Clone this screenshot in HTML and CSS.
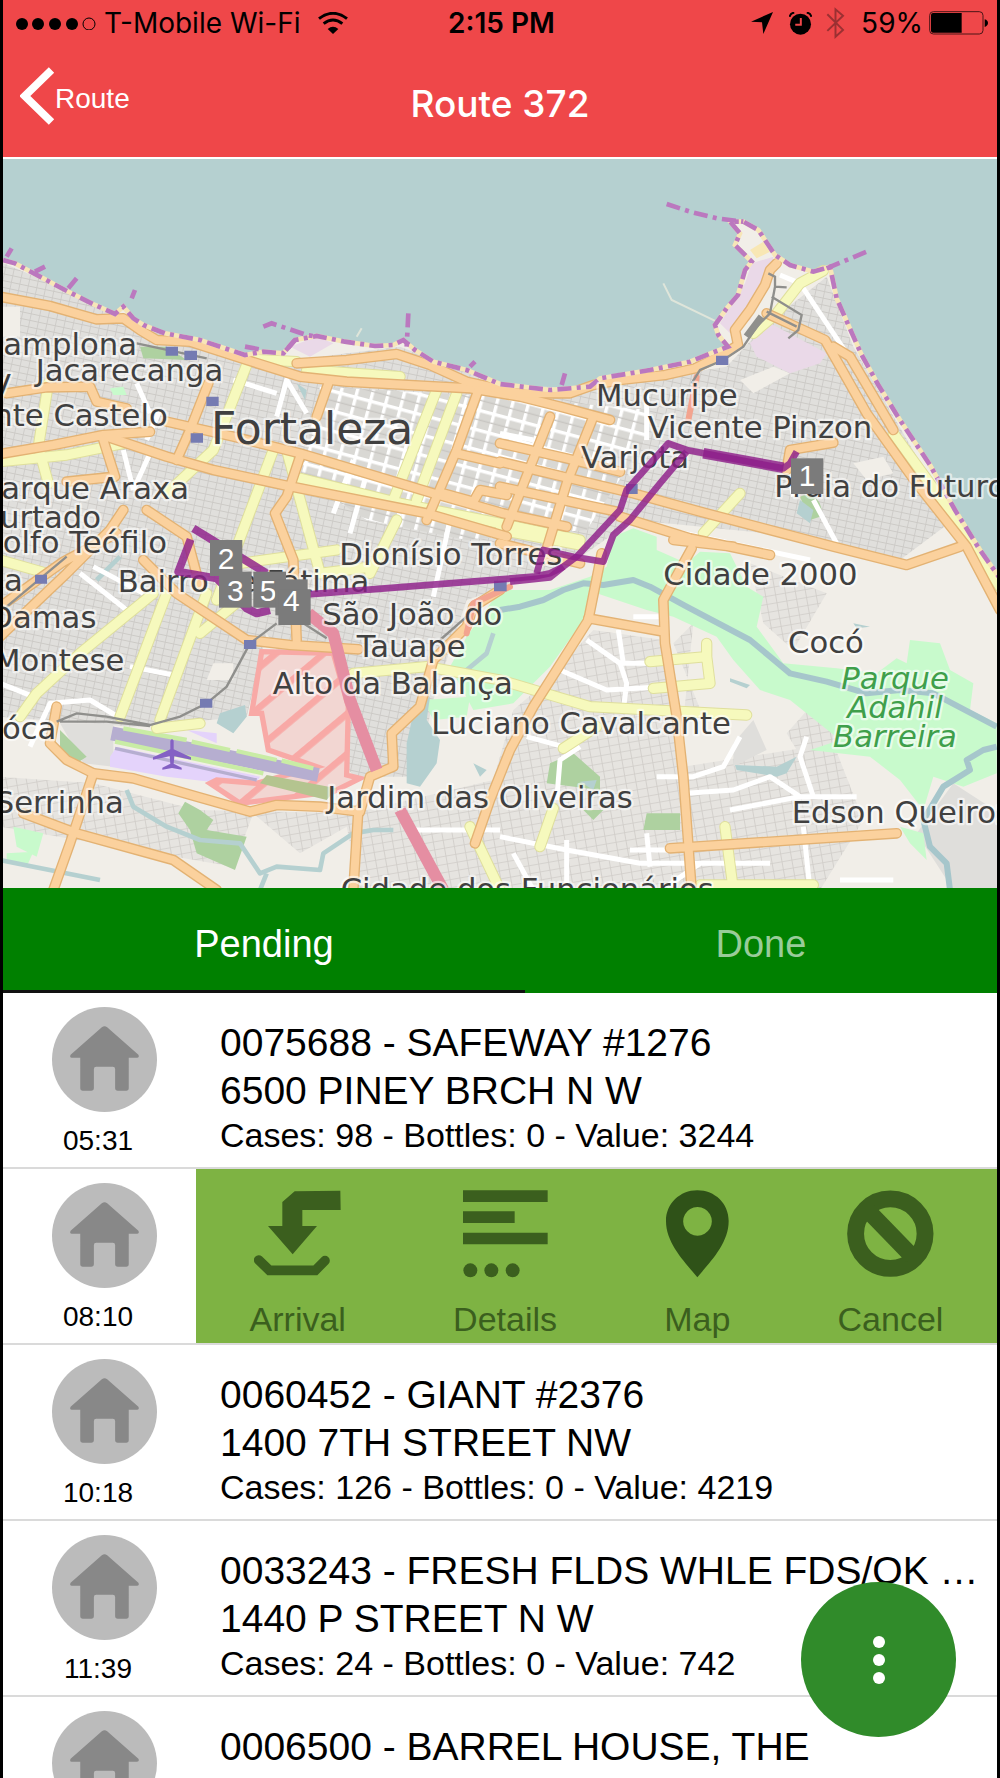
FILE: index.html
```html
<!DOCTYPE html>
<html lang="en">
<head>
    <meta charset="UTF-8">
    <meta name="viewport" content="width=device-width, initial-scale=1">
    <title>Route 372</title>
    <link rel="stylesheet" href="styles.css">
</head>
<body>
<div class="screen">
    <header class="header">
        <div class="status">
            <div class="status-left">
                <svg class="signal" viewBox="0 0 81 13" width="81" height="13">
                    <circle cx="7" cy="7" r="6"/>
                    <circle cx="23" cy="7" r="6"/>
                    <circle cx="40" cy="7" r="6"/>
                    <circle cx="57" cy="7" r="6"/>
                    <circle cx="74" cy="7" r="6" fill="none" stroke="#000"/>
                </svg>
                <span>T-Mobile Wi-Fi</span>
                <svg class="wifi" viewBox="0 0 90 66" width="30" height="22">
                    <path d="M3 20 Q45 -12 87 20" fill="none" stroke="#000" stroke-width="9"/>
                    <path d="M17 35 Q45 13 73 35" fill="none" stroke="#000" stroke-width="9"/>
                    <path d="M29 51 Q45 37 61 51 L45 66 Z"/>
                </svg>
            </div>
            <div class="clock">2:15 PM</div>
            <div class="status-right">
                <svg viewBox="0 0 66 66" width="22" height="22"><path d="M66 0 L37 66 L33 31 L0 29 Z"/></svg>
                <svg class="alarm" viewBox="0 0 70 68" width="23" height="23">
                    <circle cx="35" cy="36" r="32"/>
                    <path d="M2 14 Q4 2 16 1 M54 1 Q66 2 68 14" fill="none" stroke="#000" stroke-width="6"/>
                    <path d="M36 17 V38 H19" fill="none" stroke="#ef4749" stroke-width="6"/>
                </svg>
                <svg class="bt" viewBox="0 0 58 98" width="19" height="32"><path d="M4 22 L52 70 L29 91 V7 L52 27 L4 73" fill="none" stroke="#9b3032" stroke-width="6"/></svg>
                <span>59%</span>
                <svg class="battery" viewBox="0 0 177 72" width="59" height="24">
                    <rect x="2" y="2" width="160" height="67" rx="11" fill="none" stroke="#4b1617" stroke-width="3"/>
                    <path d="M6 12 Q6 6 12 6 H98 V65 H12 Q6 65 6 59 Z"/>
                    <path d="M167 25 Q177 28 177 36 T167 48 Z"/>
                </svg>
            </div>
        </div>
        <nav class="nav">
            <button class="back" type="button">
                <svg viewBox="0 0 104 174" width="35" height="58"><path d="M94 9 L14 87 L94 165" fill="none" stroke="#fff" stroke-width="23"/></svg>
                <span>Route</span>
            </button>
            <h1 class="title">Route 372</h1>
        </nav>
    </header>

    <!-- map units are a third of a pixel -->
    <svg class="map" viewBox="9 477 2982 2187" role="img" aria-label="Route map of Fortaleza">
        <defs>
            <pattern id="blocks" width="26" height="20" patternUnits="userSpaceOnUse" patternTransform="rotate(12)">
                <rect width="26" height="20" fill="#e0dfdc"/>
                <path d="M0 0 H26 M0 0 V20" stroke="#cccac6" stroke-width="5"/>
            </pattern>
            <pattern id="blocks2" width="30" height="24" patternUnits="userSpaceOnUse" patternTransform="rotate(-10)">
                <rect width="30" height="24" fill="#e6e4e0"/>
                <path d="M0 0 H30 M0 0 V24" stroke="#d0cdc8" stroke-width="5"/>
            </pattern>
            <pattern id="streets" width="46" height="58" patternUnits="userSpaceOnUse" patternTransform="rotate(15)">
                <rect width="46" height="58" fill="#d9d8d4"/>
                <path d="M0 0 H46 M0 0 V58" stroke="#fff" stroke-width="20"/>
                <path d="M0 33 H46" stroke="#c8c6c2" stroke-width="4"/>
            </pattern>
            <pattern id="hatch" width="92" height="92" patternUnits="userSpaceOnUse" patternTransform="rotate(50)">
                <rect width="92" height="92" fill="#f2d6d2"/>
                <rect width="20" height="92" fill="#f8a9a6"/>
            </pattern>
            <path id="coast" d="M9 780 L45 790 120 830 195 870 285 915 345 942 370 920 400 955 430 975 495 1000 600 1020 690 1050 735 1065 790 1055 850 1060 885 1020 950 1008 1035 1025 1125 1038 1180 1035 1210 1020 1245 1050 1300 1085 1400 1110 1500 1152 1650 1170 1770 1160 1800 1135 1950 1110 2070 1085 2145 1055 2184 1040 2155 1005 2145 975 2180 925 2214 885 2235 810 2255 785 2205 735 2220 700 2190 665 2230 665 2275 690 2305 735 2325 765 2370 795 2440 815 2490 800 2510 895 2545 975 2585 1065 2635 1155 2700 1260 2790 1395 2865 1530 2940 1650 3000 1735"/>
            <g id="major">
                <g transform="translate(0 450)">
                    <path d="M0 440 L150 468 290 508 370 505 420 540 470 570 570 575 740 630 900 680 1040 695 1410 715 1560 740 1680 770 1830 810"/>
                    <path d="M890 640 L1040 630 1190 612 1290 645 1400 695 1560 730 1710 730 1780 705 1860 690 1995 675 2085 655 2175 610 2214 585 2205 540 2250 480 2295 405 2310 360 2330 340"/>
                    <path d="M20 730 L140 712 270 710 290 755 380 775"/>
                    <path d="M0 912 L160 885 310 855 450 845"/>
                    <path d="M320 860 L500 920 640 960 850 1005 1280 1090 1520 1160"/>
                    <path d="M500 815 L700 860 900 910 1100 970 1300 1030 1510 1090 1700 1130"/>
                    <path d="M985 700 L950 800 M1435 720 L1370 900 1280 1110 M1650 800 L1520 1130 M1780 800 L1700 1000 1630 1230"/>
                    <path d="M1370 910 L1500 940 M1330 1030 L1420 1055 1440 1020 1520 1035"/>
                    <path d="M625 700 L570 840 530 930 M310 870 L345 980 200 995 M900 920 L860 1040 825 1090 880 1230 890 1470"/>
                    <path d="M1500 880 L1700 925 1860 965 M1500 935 L1900 1030 2100 1085 2500 1190 2720 1245 2880 1190"/>
                    <path d="M1500 1010 L1850 1085 M1500 1180 L1740 1240"/>
                    <path d="M2300 490 L2475 570 2600 790 2750 1000 2900 1190 3000 1380"/>
                    <path d="M2500 590 L2550 620 2680 840"/>
                    <path d="M2360 960 L2370 900 2500 878"/>
                </g>
                <g transform="translate(0 1530)">
                    <path d="M370 0 L330 60 200 190 0 380 M350 70 L190 155 0 290"/>
                    <path d="M440 0 L560 80 600 230 M430 150 L530 250 740 390 870 405 1075 418"/>
                    <path d="M170 590 L150 700 200 750 280 790 400 805 590 860 750 905 830 885 960 890 1080 905 1110 800 1180 770 1175 670 1260 590 1300 450 1400 350 1420 290 1500 240"/>
                    <path d="M280 790 L210 1000 160 1140 M70 910 L230 970 520 1050 650 1140 M1075 900 L1060 1140"/>
                </g>
                <g transform="translate(1500 1530)">
                    <path d="M360 20 L570 85 810 135 M520 90 L700 110"/>
                    <path d="M305 130 L265 330 100 590 30 720 -30 870 -75 1000"/>
                    <path d="M575 115 L490 270 495 400 530 620 550 800 575 1140 M265 325 L490 365 M510 1015 L1190 970"/>
                </g>
            </g>
            <g id="minor">
                <path d="M145 1150 L115 1340 145 1450 M740 1095 L640 1350 500 1480 M820 1350 L650 1800 M0 1385 L200 1365 370 1330 M900 1435 L1200 1510 1500 1570 1740 1620 M1310 1170 L1180 1500 M1370 1180 L1250 1500 M760 1078 L890 1085 M920 1110 L1200 1130"/>
                <path d="M860 1350 L960 1720 1120 1700 M1190 1560 L1110 1720 M720 1690 L1010 1650 M460 1780 L240 1960 110 2080 60 2150 M500 1780 L360 2150 M620 1780 L480 2160 M720 1800 L600 1900 M0 1680 L140 1720 M470 2185 L600 2170"/>
                <path d="M1060 2020 L1280 2000 1500 2040 1770 2120 2240 2145 M1690 2245 L1790 2180 M1950 1985 L2120 1970 2130 2050 1960 2065 M2120 1930 V1980 M1660 2425 L1620 2540 M2175 2480 L2200 2670"/>
                <path d="M2470 812 L2400 850 2330 940 2260 1000 M2220 1480 L2110 1600 M2680 1300 L2870 1560 3000 1760 M1500 1590 L1740 1635 M1410 2480 L1500 2670 M2100 2655 H2440"/>
            </g>
        </defs>

        <rect class="sea" x="0" y="470" width="3000" height="2200"/>
        <path class="land" d="M9 780 L45 790 120 830 195 870 285 915 345 942 370 920 400 955 430 975 495 1000 600 1020 690 1050 735 1065 790 1055 850 1060 885 1020 950 1008 1035 1025 1125 1038 1180 1035 1210 1020 1245 1050 1300 1085 1400 1110 1500 1152 1650 1170 1770 1160 1800 1135 1950 1110 2070 1085 2145 1055 2184 1040 2155 1005 2145 975 2180 925 2214 885 2235 810 2255 785 2205 735 2220 700 2190 665 2230 665 2275 690 2305 735 2325 765 2370 795 2440 815 2490 800 2510 895 2545 975 2585 1065 2635 1155 2700 1260 2790 1395 2865 1530 2940 1650 3000 1735 V2670 H0 V780 Z"/>
        <path fill="url(#blocks)" d="M0 785 L130 840 420 980 700 1060 880 1080 1200 1040 1500 1155 1750 1165 2180 1100 2290 980 2480 830 2560 1040 2860 1560 2700 1680 2300 1600 1900 1560 1700 1700 1400 1800 1300 2100 1250 2330 1060 2330 800 1900 740 2150 400 2180 0 2150 Z"/>
        <path fill="url(#blocks2)" d="M0 2330 L280 2350 590 2430 1060 2440 1480 2340 1540 2130 1750 1950 1960 1990 2050 2300 2500 2230 2590 2460 2460 2670 1080 2670 1040 2480 900 2560 760 2440 700 2600 0 2480 Z"/>
        <path fill="url(#blocks2)" d="M2080 1870 L2020 1930 2110 2150 2050 2160 M2250 1690 L2480 1780 2380 1950 2290 1870 Z M2440 2110 L2520 2200 2450 2350 2360 2200 Z"/>
        <path fill="url(#blocks2)" d="M1560 2670 L1480 2380 1560 2130 1780 1890 1990 1920 2060 2420 2070 2670 Z"/>
        <path fill="url(#streets)" d="M960 1160 L1500 1190 1950 1230 1930 1330 1760 1590 1400 1620 1100 1560 900 1430 Z"/>
        <path fill="#f1eee8" d="M2220 1140 L2320 1100 2370 1120 2260 1180 Z M2560 1390 L2650 1370 2680 1420 2600 1440 Z M640 1990 h60 v50 h-80 Z M9 920 H60 V1010 H9 Z"/>
        <path fill="#dfdedb" d="M2750 2500 L2860 2350 3000 2440 V2670 H2860 Z M2200 2230 L2260 2160 2300 2250 2200 2300 Z M180 2170 L340 2170 340 2300 250 2290 Z"/>

        <!-- harbour -->
        <path fill="#ead9e8" d="M2255 790 L2320 770 2320 830 2250 960 2190 1000 2160 970 2235 850 Z M2250 1030 L2310 970 2480 1060 2460 1090 2370 1120 2270 1070 Z M870 1040 L950 1010 1000 1030 930 1070 Z"/>
        <path fill="#f8e7b4" d="M2250 750 L2290 725 2310 755 2270 775 Z"/>
        <path class="whiteroad" d="M2340 825 L2400 850 2540 1060"/>
        <path class="pier-light" d="M1990 850 L2015 900 2150 965 M1070 1010 L1085 985"/>

        <!-- parks -->
        <path class="park" transform="translate(1500 1530)" d="M340 80 L400 55 470 80 470 120 560 160 600 125 690 130 740 230 790 260 770 350 850 460 1010 475 1130 490 1190 445 1220 460 1230 390 1320 400 1350 480 1420 520 1410 600 1490 640 1490 790 1390 830 1300 800 1270 900 1200 810 1110 740 930 720 1020 690 870 570 780 540 700 450 650 380 520 320 440 300 290 250 250 330 150 470 40 580 -80 600 -150 470 -100 380 0 240 150 240 270 200 320 170 Z"/>
        <path class="park" d="M1270 2100 L1410 2090 1400 2150 1300 2160 Z M330 1165 L370 1160 380 1185 340 1185 Z M2700 2480 L2770 2500 2780 2580 2730 2530 Z M20 2560 L100 2555 80 2600 20 2590 Z M40 2480 L130 2500 110 2570 50 2540 Z"/>
        <path class="wood" d="M420 1040 L500 1040 560 1080 430 1075 Z M555 2405 L600 2430 640 2460 620 2490 740 2510 705 2610 590 2560 570 2490 535 2440 Z M180 2190 L260 2270 230 2290 180 2250 Z M1650 2290 L1720 2260 1800 2330 1800 2370 1640 2350 Z M1940 2440 L2040 2440 2040 2490 1930 2490 Z M1750 2430 L1810 2430 1780 2460 Z M2400 1490 a45 45 0 0 1 60 60 l-30 10 Z"/>

        <!-- lakes and rivers -->
        <path class="water" d="M1290 2090 L1240 2140 1220 2230 1220 2350 1260 2360 1310 2290 1320 2220 1280 2160 Z M660 2140 L735 2115 740 2150 700 2200 650 2170 Z M2205 2295 L2330 2300 2390 2270 2360 2320 2330 2330 2210 2310 Z M2400 1500 L2440 1530 2430 1570 2390 1540 Z M1420 2290 L1460 2310 1440 2330 Z M1740 2345 L1790 2340 1780 2370 Z M2190 2035 L2250 2055 2240 2065 2190 2045 Z M2560 1870 L2610 1880 2570 1885 Z M890 1150 L920 1170 915 1200 Z"/>
        <path class="river" transform="translate(1500 1530)" d="M0 300 L60 290 130 270 190 240 250 220 310 225 400 210 450 230 560 290 750 390 810 440 870 490 980 515 1100 550 1200 540 1300 550 1490 650"/>
        <path class="river" transform="translate(1500 1530)" d="M1490 710 L1450 720 1400 750 1410 780 1330 830 1300 880 1270 930 1290 1010 1340 1060 1350 1140"/>
        <path class="river thin" d="M0 2580 L100 2600 300 2640 M380 2370 L400 2420 500 2480 600 2520 720 2530 780 2620 830 2600 960 2610 970 2560 1060 2500 1120 2490 1180 2490 M1480 1900 L1460 1960 1400 2010 M290 1740 L360 1670 M800 2620 L780 2670"/>

        <!-- airport and military area -->
        <path fill="#e4d3fb" d="M330 2270 L350 2240 780 2330 760 2360 500 2330 330 2300 Z M560 2190 L650 2200 650 2230 Z M810 2230 L920 2240 920 2270 810 2250 Z"/>
        <path fill="url(#hatch)" stroke="#f8a9a6" stroke-width="16" d="M785 1955 L1000 1960 1045 2120 1040 2325 1080 2335 1000 2375 720 2410 630 2350 650 2340 770 2350 950 2300 805 2250 785 2140 755 2140 Z"/>
        <path fill="#b4c48f" d="M800 2325 L1010 2365 980 2400 780 2350 Z"/>
        <path d="M335 2200 L955 2325" stroke="#b6aed0" stroke-width="42"/>
        <path d="M345 2225 L790 2320 M370 2185 L560 2220 M575 2225 L690 2250 M710 2253 L830 2280 M845 2282 L940 2305" stroke="#c9eca5" stroke-width="13"/>
        <path d="M345 2245 L770 2340" stroke="#b6aed0" stroke-width="10"/>

        <!-- white streets -->
        <g class="whiteroad">
            <path d="M410 1150 L450 1240 M400 1470 L370 1350 M400 1470 L450 1360 M480 1230 L440 1320 M700 1140 L830 1180 M830 1250 L860 1140 920 1240 M240 1720 L380 1830 M90 2240 L150 2110 270 2100 370 2160 M0 2050 L100 2090 M280 1700 L430 1780 M390 2000 L520 2025"/>
            <path d="M1000 1540 L1060 1380 M1120 1700 L1200 1540 M1050 1600 L1100 1420 M1300 1790 L1350 1560 M1500 1300 L1600 1320 M1940 1180 V1320"/>
            <path d="M1760 1920 L1860 1990 1880 2050 1870 2130 M1680 2010 L1820 2070 1990 2060 M1855 1890 L1870 1990 H1960 M1900 1850 H1980 M1580 2210 L1690 2240 M1740 2240 L1680 2280 1670 2400"/>
            <path d="M2220 2210 L2170 2300 2080 2330 H1970 M2060 2380 L2200 2370 2310 2330 2400 2390 H2570 M2420 2210 L2400 2270 2440 2390 M2190 2430 L2400 2390 M2410 2480 L2430 2670 M1500 2510 L1700 2550 1920 2590 H2310 M1540 2560 L1600 2670 M1700 2520 V2670 M1940 2500 L1950 2600 M1890 2550 H2010 M2100 2590 L2000 2660 M1220 2490 H1500 M2520 2640 H2680"/>
            <path d="M1960 1580 L2430 1680 M2440 1500 L2510 1630 M2370 1430 L2380 1490"/>
        </g>

        <use href="#minor" class="road minor-case"/>
        <use href="#minor" class="road minor-fill"/>
        <use href="#major" class="road major-case"/>
        <use href="#major" class="road major-fill"/>
        <path class="road trunk" d="M925 1840 L1000 1900 1050 2100 1130 2310 M1200 2430 L1330 2670"/>
        <path class="road salmon" d="M2090 1130 L2065 1260 M1530 1760 L1420 1810 1400 1900"/>

        <g class="rail">
            <path d="M2305 820 L2325 830 2325 860 2360 862 M2325 860 L2310 940 2270 980 2230 1040 2170 1080 2100 1110 2075 1150 M2315 890 L2405 945 2395 990 2365 1015 M2300 935 L2390 980"/>
            <path d="M170 2165 L230 2140 320 2150 450 2175 540 2150 620 2110 680 2060 750 1930 830 1870 M180 2165 L320 2165 450 2178 M910 1870 L980 1915 M410 1030 L620 1075 M1400 1850 L1320 1920 M20 1820 L200 1670"/>
            <path d="M2240 1010 L2285 950" stroke-width="22"/>
        </g>

        <use href="#coast" class="beach"/>
        <use href="#coast" class="border"/>
        <path class="border" d="M2000 612 L2070 635 2150 655 2230 665 M2480 805 L2600 755 M790 980 L815 970 920 1005 950 1010 M885 1020 L850 1060 M1225 940 L1220 1040 M395 895 L405 870 M205 865 L230 835 M105 815 L135 800 M20 770 L35 745 M1685 1155 L1695 1120 M1410 1100 L1425 1085 M735 1040 L790 1050"/>

        <g fill="#757bb2">
            <path d="M497 1040 h37 v27 h-37 Z M553 1052 h38 v28 h-38 Z M619 1190 h37 v28 h-37 Z M572 1300 h37 v28 h-37 Z M105 1724 h36 v27 h-36 Z M732 1920 h37 v27 h-37 Z M600 2096 h37 v27 h-37 Z M2148 1067 h37 v28 h-37 Z M1878 1452 h35 v30 h-35 Z M1482 1742 h38 v32 h-38 Z"/>
        </g>
        <path fill="#8461c4" d="M511 2222 q5 -8 10 0 v26 l52 24 v7 l-50 -10 -2 22 24 12 v6 l-29 -5 -29 5 v-6 l24 -12 -2 -22 -50 10 v-7 l52 -24 Z"/>

        <g class="labels">
            <text x="10" y="1065">amplona</text>
            <text x="107" y="1143">Jacarecanga</text>
            <text x="-30" y="1188">V</text>
            <text x="-20" y="1279">nte Castelo</text>
            <text class="city" x="633" y="1331">Fortaleza</text>
            <text x="4" y="1498">arque Araxa</text>
            <text x="0" y="1583">urtado</text>
            <text x="8" y="1660">olfo Teófilo</text>
            <text x="12" y="1773">a</text>
            <text x="353" y="1776">Bairro de Fátima</text>
            <text x="-32" y="1885">Damas</text>
            <text x="-18" y="2013">Montese</text>
            <text x="6" y="2218">óca</text>
            <text x="-16" y="2439">Serrinha</text>
            <text x="1018" y="1695">Dionísio Torres</text>
            <text x="967" y="1876">São João do</text>
            <text x="1070" y="1971">Tauape</text>
            <text x="818" y="2081">Alto da Balança</text>
            <text x="1294" y="2203">Luciano Cavalcante</text>
            <text x="982" y="2425">Jardim das Oliveiras</text>
            <text x="1022" y="2700">Cidade dos Funcionários</text>
            <text x="1788" y="1218">Mucuripe</text>
            <text x="1943" y="1315">Vicente Pinzon</text>
            <text x="1743" y="1403">Varjota</text>
            <text x="2323" y="1490">Praia do Futuro</text>
            <text x="1990" y="1755">Cidade 2000</text>
            <text x="2364" y="1960">Cocó</text>
            <text x="2375" y="2468">Edson Queiroz</text>
            <g class="park-label">
                <text x="2685" y="2068">Parque</text>
                <text x="2685" y="2154">Adahil</text>
                <text x="2685" y="2242">Barreira</text>
            </g>
        </g>

        <g class="route">
            <path d="M925 1783 L1500 1738 1600 1730 1650 1720 1690 1700 1730 1670 1860 1530 1880 1470 2005 1330 2060 1350 2350 1405 2370 1390 2390 1355"/>
            <path d="M2060 1355 L1980 1450 1890 1560 1840 1605 1810 1685 1720 1670 1630 1650 1610 1720 M1530 1745 L1650 1732 1690 1700"/>
            <path d="M2110 1360 L2350 1403" stroke-width="32"/>
            <path d="M580 1585 L800 1720 M572 1618 L535 1715 650 1735 740 1825 770 1840 810 1830" stroke-width="24"/>
        </g>

        <g class="pins">
            <rect x="2373" y="1375" width="97" height="107"/><text x="2421" y="1458">1</text>
            <rect x="630" y="1620" width="97" height="108"/><text x="678" y="1708">2</text>
            <rect x="657" y="1715" width="98" height="108"/><text x="706" y="1803">3</text>
            <rect x="760" y="1715" width="98" height="108"/><text x="804" y="1803">5</text>
            <rect x="826" y="1738" width="97" height="108"/>
            <rect x="835" y="1768" width="97" height="107"/><text x="874" y="1832">4</text>
        </g>
    </svg>

    <div class="tabs" role="tablist">
        <button class="tab active" type="button" role="tab" aria-selected="true">Pending</button>
        <button class="tab" type="button" role="tab" aria-selected="false">Done</button>
    </div>

    <svg class="sprite" width="0" height="0">
        <symbol id="home" viewBox="0 0 316 316">
            <circle cx="158" cy="158" r="158" fill="#bbb"/>
            <path fill="#888" d="M150 61 Q158 55 166 61 L260 144 Q264 152 256 153 H231 V244 Q231 252 223 252 H198 Q190 252 190 244 V187 Q190 180 183 180 H133 Q126 180 126 187 V244 Q126 252 118 252 H93 Q85 252 85 244 V153 H59 Q52 152 56 144 Z"/>
        </symbol>
    </svg>

    <ul class="stops">
        <li class="stop">
            <div class="when">
                <svg class="home"><use href="#home"/></svg>
                <time>05:31</time>
            </div>
            <div class="info">
                <p>0075688 - SAFEWAY #1276</p>
                <p>6500 PINEY BRCH N W</p>
                <p class="sum">Cases: 98 - Bottles: 0 - Value: 3244</p>
            </div>
        </li>
        <li class="stop">
            <div class="when">
                <svg class="home"><use href="#home"/></svg>
                <time>08:10</time>
            </div>
            <div class="actions">
                <button type="button">
                    <svg viewBox="221 119 261 264" width="87" height="88">
                        <path d="M343 123 L480 121 481 179 H366 V227 H410 L337 312 263 227 H306 V155 Z"/>
                        <path d="M235 329 L267 360 H405 L434 331" fill="none" stroke="#3b5f1e" stroke-width="29" stroke-linecap="round"/>
                    </svg>
                    <span>Arrival</span>
                </button>
                <button type="button">
                    <svg viewBox="847 119 255 264" width="85" height="88">
                        <path d="M847 120 H1101 V155 H847 Z M847 183 H1002 V218 H847 Z M847 247 H1101 V282 H847 Z"/>
                        <circle cx="869" cy="360" r="21"/>
                        <circle cx="932" cy="360" r="21"/>
                        <circle cx="996" cy="360" r="21"/>
                    </svg>
                    <span>Details</span>
                </button>
                <button type="button">
                    <svg viewBox="228 119 189 264" width="63" height="88">
                        <path class="pin" fill-rule="evenodd" d="M322 381 C285 335 228 280 228 212 C228 160 270 120 322 120 C375 120 416 160 416 212 C416 280 360 335 322 381 Z M322 170 a43 43 0 1 0 1 0 Z"/>
                    </svg>
                    <span>Map</span>
                </button>
                <button type="button">
                    <svg viewBox="773 119 263 264" width="87" height="88">
                        <circle cx="904" cy="250" r="105" fill="none" stroke="#3b5f1e" stroke-width="51"/>
                        <path d="M838 182 L970 318" stroke="#3b5f1e" stroke-width="50"/>
                    </svg>
                    <span>Cancel</span>
                </button>
            </div>
        </li>
        <li class="stop">
            <div class="when">
                <svg class="home"><use href="#home"/></svg>
                <time>10:18</time>
            </div>
            <div class="info">
                <p>0060452 - GIANT #2376</p>
                <p>1400 7TH STREET NW</p>
                <p class="sum">Cases: 126 - Bottles: 0 - Value: 4219</p>
            </div>
        </li>
        <li class="stop">
            <div class="when">
                <svg class="home"><use href="#home"/></svg>
                <time>11:39</time>
            </div>
            <div class="info">
                <p>0033243 - FRESH FLDS WHLE FDS/OK …</p>
                <p>1440 P STREET N W</p>
                <p class="sum">Cases: 24 - Bottles: 0 - Value: 742</p>
            </div>
        </li>
        <li class="stop">
            <div class="when">
                <svg class="home"><use href="#home"/></svg>
            </div>
            <div class="info">
                <p>0006500 - BARREL HOUSE, THE</p>
            </div>
        </li>
    </ul>

    <button class="fab" type="button" aria-label="More">
        <svg viewBox="0 0 12 50" width="12" height="50">
            <circle cx="6" cy="7" r="6"/>
            <circle cx="6" cy="25" r="6"/>
            <circle cx="6" cy="43" r="6"/>
        </svg>
    </button>
</div>
</body>
</html>
```
FILE: styles.css
```css
* {
    box-sizing: border-box;
    margin: 0;
    padding: 0;
}

body {
    font-family: "Liberation Sans", Arial, sans-serif;
    color: #000;
}

button {
    border: 0;
    background: none;
    font: inherit;
    cursor: pointer;
}

.screen {
    position: relative;
    display: flex;
    flex-direction: column;
    height: 100vh;
    overflow: hidden;
    background-color: #fff;
    border-left: 3px solid #000;
    border-right: 3px solid #000;
}

/* header */
.header {
    flex: none;
    background-color: #ef4749;
    border-bottom: 2px solid #fff;
}

.status {
    display: grid;
    grid-template-columns: 1fr auto 1fr;
    align-items: center;
    height: 46px;
    padding: 0 9px 0 12px;
    font: 28px "Inter", sans-serif;
}

.status-left,
.status-right {
    display: flex;
    align-items: center;
}

.status-right {
    justify-content: flex-end;
}

.signal {
    margin-right: 8px;
}

.wifi {
    margin-left: 18px;
}

.clock {
    font-weight: 600;
}

.alarm {
    margin: 0 14px 0 16px;
}

.bt {
    margin-right: 16px;
}

.battery {
    margin-left: 6px;
}

.nav {
    display: grid;
    grid-template-columns: 1fr auto 1fr;
    align-items: center;
    height: 111px;
    color: #fff;
}

.back {
    display: flex;
    align-items: center;
    justify-self: start;
    padding: 0 16px 6px 17px;
    color: #fff;
    font-size: 28px;
}

.back svg {
    margin-bottom: 6px;
}

.title {
    padding-top: 3px;
    font: 500 37px "Inter", sans-serif;
}

/* map */
.map {
    display: block;
    flex: none;
    width: 100%;
    height: auto;
}

.sea {
    fill: #b5d0d0;
}

.land {
    fill: #f1eee8;
}

.park {
    fill: #c8facc;
}

.wood {
    fill: #aed1a0;
}

.water {
    fill: #b5d0d0;
}

.river {
    fill: none;
    stroke: #a6c6cb;
    stroke-width: 18;
    stroke-linejoin: round;
}

.river.thin {
    stroke: #b5d0d0;
    stroke-width: 14;
}

.whiteroad {
    fill: none;
    stroke: #fff;
    stroke-width: 15;
    stroke-linejoin: round;
}

.pier-light {
    fill: none;
    stroke: #dfe5da;
    stroke-width: 6;
}

.road {
    fill: none;
    stroke-linejoin: round;
    stroke-linecap: round;
}

.minor-case {
    stroke: #dfdf9c;
    stroke-width: 34;
}

.minor-fill {
    stroke: #f6f9bd;
    stroke-width: 28;
}

.major-case {
    stroke: #e3b273;
    stroke-width: 32;
}

.major-fill {
    stroke: #fbd19d;
    stroke-width: 24;
}

.trunk {
    stroke: #e58ea2;
    stroke-width: 36;
    stroke-linecap: butt;
}

.salmon {
    stroke: #f3a48f;
    stroke-width: 18;
}

.rail {
    fill: none;
    stroke: #8f8f8c;
    stroke-width: 7;
}

.beach {
    fill: none;
    stroke: #f7e6b8;
    stroke-width: 14;
}

.border {
    fill: none;
    stroke: #bb78bf;
    stroke-width: 14;
    stroke-dasharray: 42 16 12 16;
}

.labels {
    font: 92px "DejaVu Sans", sans-serif;
    fill: #404040;
    stroke: rgba(255, 255, 255, .6);
    stroke-width: 14;
    stroke-linejoin: round;
    paint-order: stroke;
}

.labels .city {
    font-size: 132px;
}

.park-label {
    font-style: italic;
    fill: #3f9f4b;
    text-anchor: middle;
}

.route {
    fill: none;
    stroke: #8e1f8a;
    stroke-width: 20;
    stroke-linejoin: round;
    stroke-opacity: .82;
}

.pins {
    font: 90px "Liberation Sans", Arial, sans-serif;
    text-anchor: middle;
    fill: #7b7b7b;
}

.pins text {
    fill: #fff;
}

/* tabs */
.tabs {
    display: flex;
    flex: none;
    height: 105px;
    background-color: #008000;
}

.tab {
    flex: 1;
    padding-top: 10px;
    border-bottom: 3px solid transparent;
    color: #99cc99;
    font-size: 38px;
}

.tab.active {
    flex: 0 0 52.5%;
    border-bottom-color: #111;
    color: #fff;
}

/* stops */
.sprite {
    position: absolute;
}

.stops {
    flex: 1;
    min-height: 0;
    overflow: hidden;
    list-style: none;
}

.stop {
    display: flex;
    height: 176px;
    border-bottom: 2px solid #dadada;
}

.when {
    flex: none;
    width: 193px;
    padding: 14px 0 0 49px;
}

.home {
    display: block;
    width: 105px;
    height: 105px;
}

.when time {
    display: block;
    width: 92px;
    margin-top: 13px;
    font-size: 28px;
    line-height: 32px;
    text-align: center;
}

.info {
    flex: 1;
    min-width: 0;
    padding: 26px 0 0 24px;
    font-size: 39px;
    line-height: 48px;
    white-space: nowrap;
}

.info .sum {
    font-size: 34px;
    line-height: 41px;
}

.actions {
    display: flex;
    flex: 1;
    justify-content: space-around;
    background-color: #7eb343;
}

.actions button {
    display: flex;
    flex-direction: column;
    align-items: center;
    gap: 21px;
    padding-top: 21px;
    color: #3b5f1e;
    font-size: 34px;
    line-height: 40px;
}

.actions svg {
    fill: #3b5f1e;
}

.actions .pin {
    fill: #2f5218;
}

/* floating button */
.fab {
    position: absolute;
    right: 41px;
    bottom: 41px;
    display: flex;
    align-items: center;
    justify-content: center;
    width: 155px;
    height: 155px;
    border-radius: 50%;
    background-color: #308b2a;
}

.fab svg {
    fill: #fff;
}
```
